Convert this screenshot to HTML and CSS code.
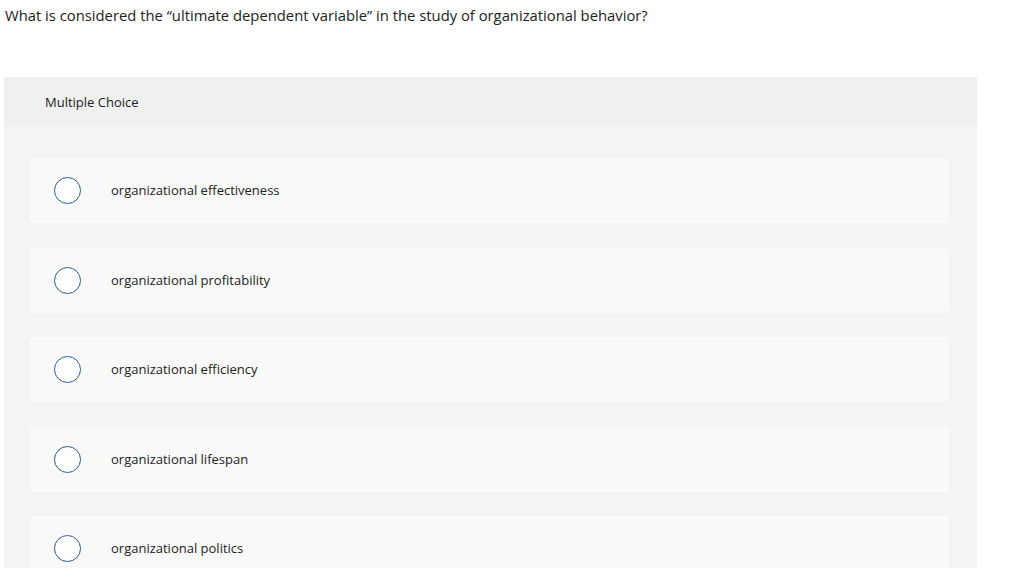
FILE: index.html
```html
<!DOCTYPE html>
<html lang="en">
<head>
<meta charset="utf-8">
<title>Multiple Choice</title>
<link rel="stylesheet" href="styles.css">
</head>
<body>
<p class="question">What is considered the “ultimate dependent variable” in the study of organizational behavior?</p>
<section class="panel">
  <div class="panel-header">Multiple Choice</div>
  <div class="panel-body">
    <label class="option"><span class="radio"></span><span class="option-text">organizational effectiveness</span></label>
    <label class="option"><span class="radio"></span><span class="option-text">organizational profitability</span></label>
    <label class="option"><span class="radio"></span><span class="option-text">organizational efficiency</span></label>
    <label class="option"><span class="radio"></span><span class="option-text">organizational lifespan</span></label>
    <label class="option"><span class="radio"></span><span class="option-text">organizational politics</span></label>
  </div>
</section>
</body>
</html>
```
FILE: styles.css
```css
html, body {
  margin: 0;
  padding: 0;
  background: #ffffff;
}
body {
  font-family: "Open Sans", "Liberation Sans", sans-serif;
  font-variant-ligatures: none;
  color: #222222;
}
.question {
  margin: 0;
  padding: 6px 5px 0 5px;
  height: 77px;
  box-sizing: border-box;
  font-size: 14.8px;
  line-height: 18px;
  color: #222222;
}
.panel {
  margin-left: 4px;
  width: 973px;
  height: 491px;
  overflow: hidden;
  background: #f4f4f4;
  border-radius: 2px 2px 0 0;
}
.panel-header {
  height: 49px;
  background: #f0f0f0;
  display: flex;
  align-items: center;
  padding-left: 41px;
  font-size: 13px;
  color: #222222;
}
.panel-body {
  display: flex;
  flex-direction: column;
  gap: 24.5px;
  padding: 32px 28px 0 26px;
}
.option {
  height: 65px;
  flex: none;
  background: #f9f9f9;
  border-radius: 3px;
  display: flex;
  align-items: center;
  padding-left: 24px;
}
.radio {
  width: 27px;
  height: 27px;
  box-sizing: border-box;
  border: 1.5px solid #2b5a94;
  border-radius: 50%;
  background: #ffffff;
  flex: none;
}
.option-text {
  margin-left: 30px;
  font-size: 13px;
  line-height: 16px;
  padding-bottom: 1px;
  color: #222222;
}
```
